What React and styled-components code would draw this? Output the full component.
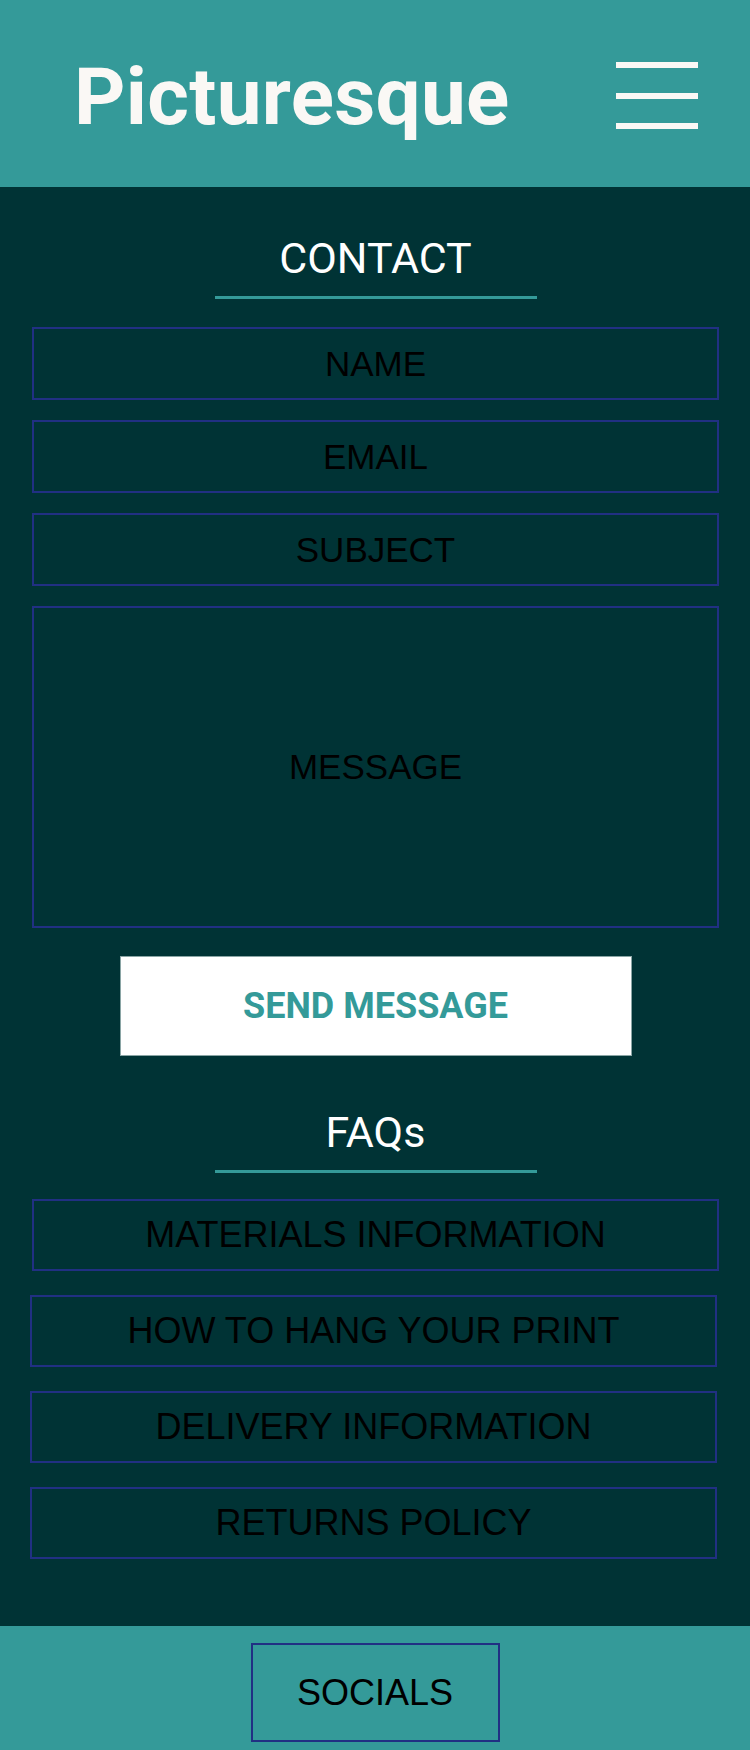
import React from 'react'
import styled, { createGlobalStyle } from 'styled-components'

/* Page colours */
const TEAL = '#349a99'
const DARK = '#003335'
const NAVY = '#213083'

const faqs = [
  'MATERIALS INFORMATION',
  'HOW TO HANG YOUR PRINT',
  'DELIVERY INFORMATION',
  'RETURNS POLICY',
]

export default function App() {
  return (
    <>
      <GlobalStyle />
      <Header>
        <Logo>Picturesque</Logo>
        <Burger aria-label="menu">
          <Bar />
          <Bar />
          <Bar />
        </Burger>
      </Header>

      <Main>
        <Heading>CONTACT</Heading>
        <Divider />
        <Form onSubmit={e => e.preventDefault()}>
          <Field type="text" placeholder="NAME" />
          <Field type="email" placeholder="EMAIL" />
          <Field type="text" placeholder="SUBJECT" />
          <Message placeholder="MESSAGE" />
          <SendButton type="submit">SEND MESSAGE</SendButton>
        </Form>

        <Heading $top>FAQs</Heading>
        <Divider />
        <FaqList>
          {faqs.map((f, i) => (
            <FaqItem key={f} $first={i === 0}>{f}</FaqItem>
          ))}
        </FaqList>
      </Main>

      <Footer>
        <Socials>SOCIALS</Socials>
      </Footer>
    </>
  )
}

/* CSS Styled Components Only Below this comment*/
const GlobalStyle = createGlobalStyle`
  * { box-sizing: border-box; }
  body {
    margin: 0;
    background: ${DARK};
    font-family: "Liberation Sans", Arial, sans-serif;
  }
`

const Header = styled.header`
  height:           187px;
  background:       ${TEAL};
  display:          flex;
  align-items:      center;
  justify-content:  space-between;
  padding:          0 52px 0 74px;
`

const Logo = styled.h1`
  margin:           7px 0 0;
  font-family:      Roboto, "Noto Sans", sans-serif;
  font-weight:      700;
  font-size:        80px;
  line-height:      80px;
  letter-spacing:   0.3px;
  color:            #faf8f5;
`

const Burger = styled.button`
  width:            82px;
  height:           67px;
  margin-top:       4px;
  padding:          0;
  border:           none;
  background:       none;
  display:          flex;
  flex-direction:   column;
  justify-content:  space-between;
  cursor:           pointer;
`

const Bar = styled.span`
  display:          block;
  height:           6px;
  width:            100%;
  background:       #faf8f5;
`

const Main = styled.main`
  background:       ${DARK};
  padding:          45px 31px 67px 32px;
  display:          flex;
  flex-direction:   column;
  align-items:      center;
`

const Heading = styled.h2`
  margin:           ${p => (p.$top ? '50px' : '0')} 0 0;
  font-family:      Roboto, "Noto Sans", sans-serif;
  font-weight:      400;
  font-size:        43px;
  line-height:      52px;
  color:            #ffffff;
`

const Divider = styled.hr`
  width:            322px;
  height:           3px;
  margin:           12px 0 0;
  border:           none;
  background:       ${TEAL};
`

const Form = styled.form`
  width:            100%;
  margin-top:       28px;
  display:          flex;
  flex-direction:   column;
  align-items:      center;
  gap:              20px;
`

const fieldText = `
  width:            100%;
  border:           2px solid ${NAVY};
  background:       transparent;
  font-family:      "Liberation Sans", Arial, sans-serif;
  font-size:        35px;
  text-align:       center;
  color:            #000;
  outline:          none;
  &::placeholder { color: #000; opacity: 1; }
`

const Field = styled.input`
  ${fieldText}
  height:           73px;
  padding:          0 10px;
`

const Message = styled.textarea`
  ${fieldText}
  height:           322px;
  padding:          139px 10px 0;
  resize:           none;
  line-height:      40px;
`

const SendButton = styled.button`
  width:            512px;
  height:           100px;
  margin-top:       8px;
  background:       #ffffff;
  border:           1px solid #8aa5a5;
  font-family:      Roboto, "Noto Sans", sans-serif;
  font-weight:      700;
  font-size:        36px;
  color:            ${TEAL};
  cursor:           pointer;
`

const FaqList = styled.div`
  width:            100%;
  margin-top:       26px;
  display:          flex;
  flex-direction:   column;
  gap:              24px;
`

const FaqItem = styled.button`
  height:           72px;
  width:            100%;
  margin-left:      ${p => (p.$first ? '0' : '-2px')};
  border:           2px solid ${NAVY};
  background:       transparent;
  font-family:      "Liberation Sans", Arial, sans-serif;
  font-size:        36px;
  color:            #000;
  cursor:           pointer;
`

const Footer = styled.footer`
  background:       ${TEAL};
  padding:          17px 0 40px;
  display:          flex;
  justify-content:  center;
`

const Socials = styled.button`
  width:            249px;
  height:           99px;
  border:           2px solid ${NAVY};
  background:       transparent;
  font-family:      "Liberation Sans", Arial, sans-serif;
  font-size:        36px;
  color:            #000;
  cursor:           pointer;
`
